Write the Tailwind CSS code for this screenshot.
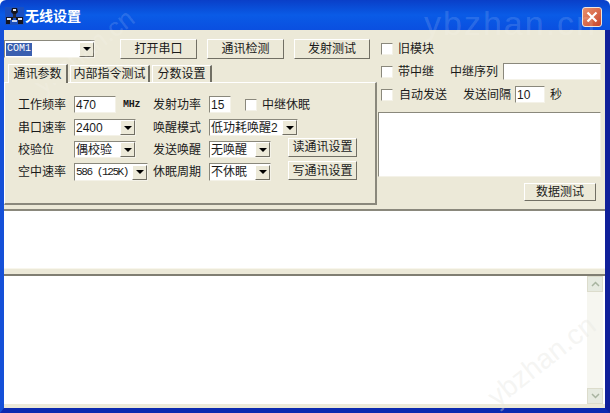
<!DOCTYPE html>
<html lang="zh">
  <head>
    <meta charset="UTF-8" />
    <title>无线设置</title>
    <script src="https://cdn.jsdelivr.net/npm/@tailwindcss/browser@4"></script>
  </head>
  <body class="bg-[#0a3fd0]">
    <div class="relative w-[610px] h-[413px] overflow-hidden flex flex-col text-[12px] leading-none text-[#1a1a1a] bg-white font-['Liberation_Sans','Noto_Sans_CJK_SC',sans-serif]">
      <!-- 标题栏 -->
      <div class="h-[30px] shrink-0 flex items-center pl-[5px] pr-[8px] rounded-t-[6px] bg-gradient-to-b from-[#0a3fc8] via-[#0a5be6] to-[#0a4fe0]">
        <svg width="19" height="18" viewBox="0 0 19 18" class="mt-[2px]">
          <rect width="19" height="18" fill="#1a4fc0" />
          <path d="M7 1h5l1 4-2 2H8L6 5z" fill="#15151f" />
          <path d="M8 2h3v2H8z" fill="#e8e8f0" />
          <path d="M8 7h3v4H8z" fill="#2a2a38" />
          <path d="M1 10h7v3H5v4H1zM11 10h7v7h-5v-4h-2z" fill="#15151f" />
          <path d="M2 11h4v2H2zM13 11h4v2h-4z" fill="#f0f0f4" />
          <path d="M7 13h5v2H7z" fill="#c8d4f0" />
        </svg>
        <span class="ml-[1px] mt-[1px] text-[14px] font-bold text-white">无线设置</span>
        <div class="ml-auto mt-[4px] w-[20px] h-[20px] rounded-[3px] border border-[#f0e4dc] bg-gradient-to-br from-[#e8906c] to-[#c8442c] flex items-center justify-center">
          <svg width="12" height="12" viewBox="0 0 12 12">
            <path d="M1.500 1.500l9 9M10.500 1.500l-9 9" stroke="#fff" stroke-width="2.200" />
          </svg>
        </div>
      </div>

      <div class="flex-1 flex flex-col min-h-0 border-l-4 border-l-[#1550d8] border-r-5 border-r-[#10209a] border-b-5 border-b-[#0c2ab0] bg-[#ece9d8]">
        <!-- 上部设置区 -->
        <div class="h-[179px] shrink-0 flex">
          <div class="w-[374px] shrink-0">
            <div class="mt-[9px] h-[20px] flex items-center">
              <div class="w-[91px] h-[18px] flex items-center bg-white border border-t-[#8a887c] border-l-[#8a887c] border-r-[#f4f2e8] border-b-[#f4f2e8]">
                <span class="ml-[1px] px-[1px] h-[13px] flex items-center bg-[#3a5fb0] text-white text-[10px] font-['Liberation_Mono',monospace]">COM1</span>
                <span class="ml-auto w-[15px] h-[15px] flex items-center justify-center bg-[#ece9d8] border border-t-[#fff] border-l-[#fff] border-r-[#716f64] border-b-[#716f64]"><span class="border-x-[4px] border-t-[4px] border-x-transparent border-t-black"></span></span>
              </div>
              <div class="ml-[25px] w-[77px] h-[20px] flex items-center justify-center bg-[#ece9d8] border border-t-white border-l-white border-r-[#716f64] border-b-[#716f64]">打开串口</div>
              <div class="ml-[10px] w-[77px] h-[20px] flex items-center justify-center bg-[#ece9d8] border border-t-white border-l-white border-r-[#716f64] border-b-[#716f64]">通讯检测</div>
              <div class="ml-[10px] w-[76px] h-[20px] flex items-center justify-center bg-[#ece9d8] border border-t-white border-l-white border-r-[#716f64] border-b-[#716f64]">发射测试</div>
            </div>
            <!-- 选项卡 -->
            <div class="mt-[4px] pl-[4px] h-[19px] flex items-end gap-[2px]">
              <div class="relative z-10 w-[60px] h-[19px] mb-[-1px] flex items-center justify-center bg-[#ece9d8] border-t border-l border-white border-r-2 border-r-[#716f64]">通讯参数</div>
              <div class="w-[80px] h-[17px] flex items-center justify-center border-t border-l border-white border-r-2 border-r-[#716f64]">内部指令测试</div>
              <div class="w-[60px] h-[17px] flex items-center justify-center border-t border-l border-white border-r-2 border-r-[#716f64]">分数设置</div>
            </div>
            <div class="w-[373px] h-[123px] pl-[13px] pt-[13px] border-t border-l border-t-white border-l-white border-r-2 border-b-2 border-r-[#8a887c] border-b-[#8a887c]">
              <div class="h-[17px] flex items-center">
                <span class="w-[56px]">工作频率</span>
                <div class="w-[42px] h-[17px] pl-[1px] flex items-center bg-white border border-t-[#8a887c] border-l-[#8a887c] border-r-[#f4f2e8] border-b-[#f4f2e8]">470</div>
                <span class="ml-[7px] w-[30px] text-[10px] tracking-[-0.3px] font-bold font-['Liberation_Mono',monospace]">MHz</span>
                <span class="w-[56px]">发射功率</span>
                <div class="w-[22px] h-[17px] pl-[1px] flex items-center bg-white border border-t-[#8a887c] border-l-[#8a887c] border-r-[#f4f2e8] border-b-[#f4f2e8]">15</div>
                <span class="ml-[14px] w-[12px] h-[12px] bg-white border border-t-[#8a887c] border-l-[#8a887c] border-r-[#f4f2e8] border-b-[#f4f2e8]"></span>
                <span class="ml-[5px]">中继休眠</span>
              </div>
              <div class="mt-[6px] h-[17px] flex items-center">
                <span class="w-[56px]">串口速率</span>
                <div class="w-[62px] h-[17px] pl-[1px] flex items-center bg-white border border-t-[#8a887c] border-l-[#8a887c] border-r-[#f4f2e8] border-b-[#f4f2e8]">2400
                  <span class="ml-auto w-[15px] h-[15px] flex items-center justify-center bg-[#ece9d8] border border-t-[#fff] border-l-[#fff] border-r-[#716f64] border-b-[#716f64]"><span class="border-x-[4px] border-t-[4px] border-x-transparent border-t-black"></span></span>
                </div>
                <span class="ml-[17px] w-[56px]">唤醒模式</span>
                <div class="w-[89px] h-[17px] pl-[1px] flex items-center bg-white border border-t-[#8a887c] border-l-[#8a887c] border-r-[#f4f2e8] border-b-[#f4f2e8]">低功耗唤醒2
                  <span class="ml-auto w-[15px] h-[15px] flex items-center justify-center bg-[#ece9d8] border border-t-[#fff] border-l-[#fff] border-r-[#716f64] border-b-[#716f64]"><span class="border-x-[4px] border-t-[4px] border-x-transparent border-t-black"></span></span>
                </div>
              </div>
              <div class="mt-[5px] h-[17px] flex items-center">
                <span class="w-[56px]">校验位</span>
                <div class="w-[62px] h-[17px] pl-[1px] flex items-center bg-white border border-t-[#8a887c] border-l-[#8a887c] border-r-[#f4f2e8] border-b-[#f4f2e8]">偶校验
                  <span class="ml-auto w-[15px] h-[15px] flex items-center justify-center bg-[#ece9d8] border border-t-[#fff] border-l-[#fff] border-r-[#716f64] border-b-[#716f64]"><span class="border-x-[4px] border-t-[4px] border-x-transparent border-t-black"></span></span>
                </div>
                <span class="ml-[17px] w-[56px]">发送唤醒</span>
                <div class="w-[62px] h-[17px] pl-[1px] flex items-center bg-white border border-t-[#8a887c] border-l-[#8a887c] border-r-[#f4f2e8] border-b-[#f4f2e8]">无唤醒
                  <span class="ml-auto w-[15px] h-[15px] flex items-center justify-center bg-[#ece9d8] border border-t-[#fff] border-l-[#fff] border-r-[#716f64] border-b-[#716f64]"><span class="border-x-[4px] border-t-[4px] border-x-transparent border-t-black"></span></span>
                </div>
                <div class="ml-[17px] -mt-[5px] w-[69px] h-[19px] flex items-center justify-center bg-[#ece9d8] border border-t-white border-l-white border-r-[#716f64] border-b-[#716f64]">读通讯设置</div>
              </div>
              <div class="mt-[5px] h-[18px] flex items-center">
                <span class="w-[56px]">空中速率</span>
                <div class="w-[74px] h-[18px] pl-[1px] flex items-center bg-white border border-t-[#8a887c] border-l-[#8a887c] border-r-[#f4f2e8] border-b-[#f4f2e8] text-[11px] font-['Liberation_Mono',monospace] tracking-[-1.4px]">586 (125K)
                  <span class="ml-auto w-[15px] h-[15px] flex items-center justify-center bg-[#ece9d8] border border-t-[#fff] border-l-[#fff] border-r-[#716f64] border-b-[#716f64]"><span class="border-x-[4px] border-t-[4px] border-x-transparent border-t-black"></span></span>
                </div>
                <span class="ml-[5px] w-[56px]">休眠周期</span>
                <div class="w-[62px] h-[18px] pl-[1px] flex items-center bg-white border border-t-[#8a887c] border-l-[#8a887c] border-r-[#f4f2e8] border-b-[#f4f2e8]">不休眠
                  <span class="ml-auto w-[15px] h-[15px] flex items-center justify-center bg-[#ece9d8] border border-t-[#fff] border-l-[#fff] border-r-[#716f64] border-b-[#716f64]"><span class="border-x-[4px] border-t-[4px] border-x-transparent border-t-black"></span></span>
                </div>
                <div class="ml-[17px] -mt-[3px] w-[69px] h-[19px] flex items-center justify-center bg-[#ece9d8] border border-t-white border-l-white border-r-[#716f64] border-b-[#716f64]">写通讯设置</div>
              </div>
            </div>
          </div>

          <!-- 右侧 -->
          <div class="flex-1 min-w-0">
            <div class="mt-[12px] h-[14px] pl-[3px] flex items-center">
              <span class="w-[12px] h-[12px] bg-white border border-t-[#8a887c] border-l-[#8a887c] border-r-[#f4f2e8] border-b-[#f4f2e8]"></span>
              <span class="ml-[5px]">旧模块</span>
            </div>
            <div class="mt-[7px] h-[17px] pl-[3px] flex items-center">
              <span class="w-[12px] h-[12px] bg-white border border-t-[#8a887c] border-l-[#8a887c] border-r-[#f4f2e8] border-b-[#f4f2e8]"></span>
              <span class="ml-[5px]">带中继</span>
              <span class="ml-[16px]">中继序列</span>
              <div class="ml-[5px] w-[98px] h-[17px] bg-white border border-t-[#8a887c] border-l-[#8a887c] border-r-[#f4f2e8] border-b-[#f4f2e8]"></div>
            </div>
            <div class="mt-[6px] h-[17px] pl-[3px] flex items-center">
              <span class="w-[12px] h-[12px] bg-white border border-t-[#8a887c] border-l-[#8a887c] border-r-[#f4f2e8] border-b-[#f4f2e8]"></span>
              <span class="ml-[6px]">自动发送</span>
              <span class="ml-[16px]">发送间隔</span>
              <div class="ml-[4px] w-[30px] h-[17px] pl-[1px] flex items-center bg-white border border-t-[#8a887c] border-l-[#8a887c] border-r-[#f4f2e8] border-b-[#f4f2e8]">10</div>
              <span class="ml-[5px]">秒</span>
            </div>
            <div class="mt-[9px] w-[223px] h-[65px] bg-white border border-t-[#8a887c] border-l-[#8a887c] border-r-[#f4f2e8] border-b-[#f4f2e8]"></div>
            <div class="mt-[6px] ml-[146px] w-[72px] h-[18px] flex items-center justify-center bg-[#ece9d8] border border-t-white border-l-white border-r-[#716f64] border-b-[#716f64]">数据测试</div>
          </div>
        </div>
        <div class="h-[2px] shrink-0 bg-[#8a887c]"></div>

        <div class="h-[57px] shrink-0 bg-white"></div>
        <div class="h-[8px] shrink-0 bg-[#ece9d8] border-t border-[#f8f6ec] border-b-2 border-b-[#807e72]"></div>

        <!-- 下部日志区 -->
        <div class="flex-1 min-h-0 flex justify-end bg-white">
          <div class="w-[16px] mr-[2px] flex flex-col justify-between bg-[#f6f6f0]">
            <div class="h-[16px] flex items-center justify-center bg-[#e6eae0] border border-[#dcdccc]">
              <svg width="9" height="6" viewBox="0 0 9 6"><path d="M1 5l3.500-3.500L8 5" fill="none" stroke="#a8b4a0" stroke-width="1.500" /></svg>
            </div>
            <div class="h-[16px] flex items-center justify-center bg-[#e6eae0] border border-[#dcdccc]">
              <svg width="9" height="6" viewBox="0 0 9 6"><path d="M1 1l3.500 3.500L8 1" fill="none" stroke="#a8b4a0" stroke-width="1.500" /></svg>
            </div>
          </div>
        </div>
        <div class="h-[4px] shrink-0 bg-[#ece9d8]"></div>
      </div>

      <!-- 水印 -->
      <span class="absolute left-[424px] top-[6px] text-[34px] tracking-[2px] text-white/15 font-['Liberation_Sans',sans-serif]">ybzhan.cn</span>
      <span class="absolute left-[25px] top-[38px] -rotate-[38deg] text-[26px] text-white/15 font-['Liberation_Sans',sans-serif]">ybzhan.cn</span>
      <span class="absolute left-[478px] top-[347px] -rotate-[38deg] text-[28px] text-[#e6e6e0]/40 font-['Liberation_Sans',sans-serif]">ybzhan.cn</span>
    </div>
  </body>
</html>
